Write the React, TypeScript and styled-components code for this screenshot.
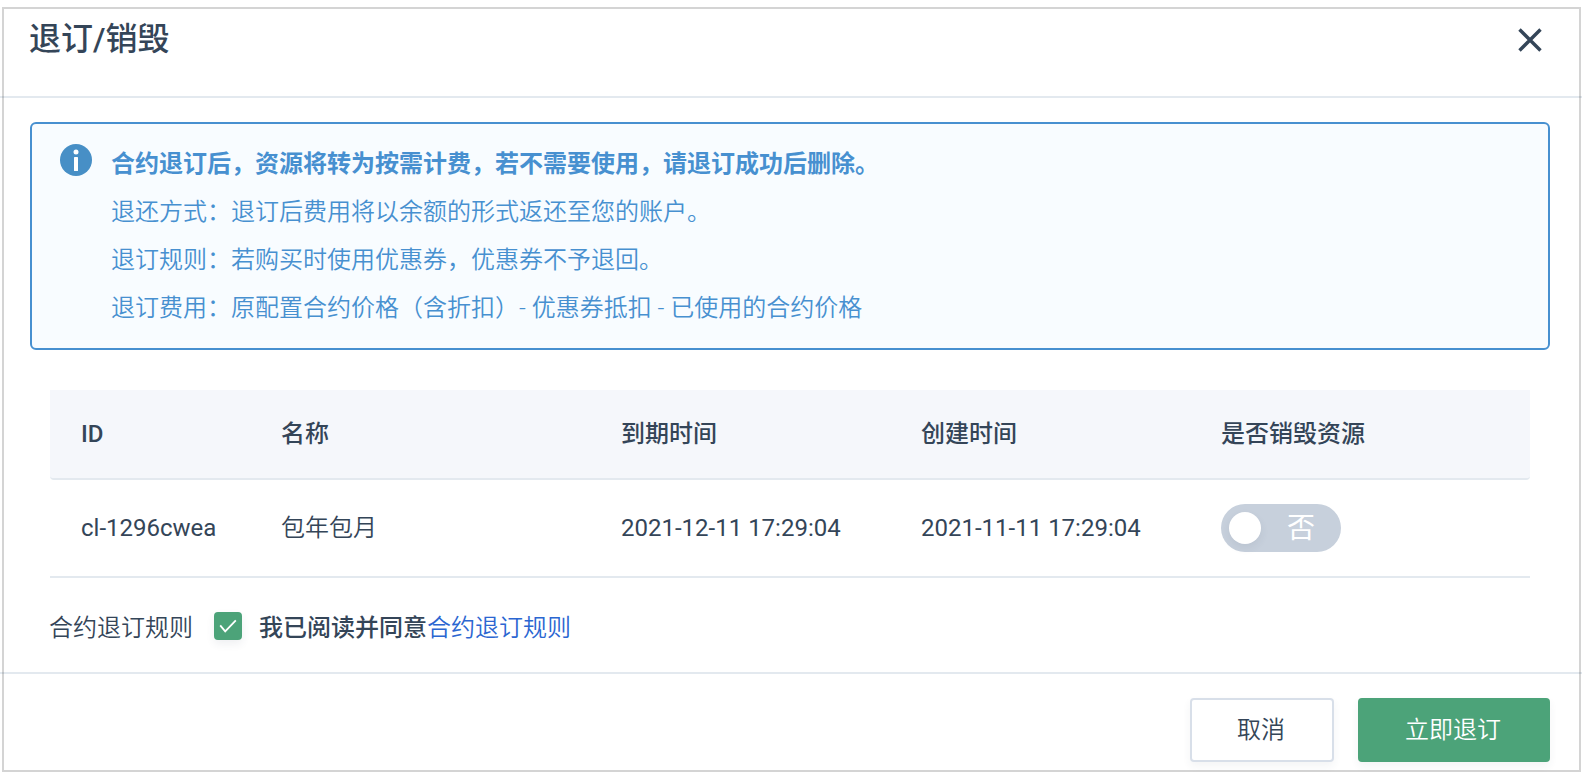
import React, { useState } from 'react';
import styled, { createGlobalStyle } from 'styled-components';

const color = {
  text: '#344558',
  line: '#e3e9ef',
  frame: 'rgba(0, 0, 0, 0.17)',
  blue: '#4790d0',
  infoBg: '#f8fcff',
  link: '#2b66d1',
  green: '#4ca379',
  headBg: '#f5f7fb',
  switchOff: '#c7d0dc',
  buttonBorder: '#d8dfe9',
};

const GlobalStyle = createGlobalStyle`
  * { box-sizing: border-box; }
  body {
    margin: 0;
    background: #fff;
    color: ${color.text};
    font-family: Roboto, 'Noto Sans CJK SC', sans-serif;
    font-size: 24px;
    font-weight: 350;
    line-height: 48px;
  }
`;

const Dialog = styled.main`
  position: relative;
  min-height: 100vh;
  display: flex;
  flex-direction: column;

  &::after {
    content: '';
    position: absolute;
    inset: 7px 1px 0 2px;
    border: 2px solid ${color.frame};
    pointer-events: none;
  }
`;

const Header = styled.header`
  display: flex;
  justify-content: space-between;
  align-items: flex-start;
  padding: 16px 32px 32px 29px;
  border-bottom: 2px solid ${color.line};
`;

const Title = styled.h1`
  margin: 0;
  font-size: 32px;
  font-weight: 500;
  line-height: 46px;
`;

const CloseButton = styled.button`
  display: flex;
  align-items: center;
  justify-content: center;
  width: 40px;
  height: 48px;
  padding: 0;
  border: 0;
  background: none;
  color: inherit;
  cursor: pointer;
`;

const Body = styled.section`
  flex: 1;
  padding: 24px 32px 20px 30px;
`;

const Notice = styled.div`
  display: flex;
  gap: 19px;
  padding: 16px 28px;
  border: 2px solid ${color.blue};
  border-radius: 6px;
  background: ${color.infoBg};
  color: ${color.blue};

  svg {
    flex: none;
    margin-top: 4px;
  }
`;

const NoticeLine = styled.p<{ $strong?: boolean }>`
  margin: 0;
  font-weight: ${(p) => (p.$strong ? 600 : 350)};
`;

const Content = styled.div`
  padding: 40px 20px 0;
`;

const Table = styled.table`
  width: 100%;
  table-layout: fixed;
  border-collapse: separate;
  border-spacing: 0;
  text-align: left;
`;

const HeadCell = styled.th<{ $width?: number }>`
  width: ${(p) => (p.$width ? `${p.$width}px` : 'auto')};
  height: 90px;
  padding: 0 0 0 31px;
  background: ${color.headBg};
  border-bottom: 2px solid ${color.line};
  font-weight: 500;

  &:first-child { border-bottom-left-radius: 4px; }
  &:last-child { border-bottom-right-radius: 4px; }
`;

const Cell = styled.td<{ $latin?: boolean }>`
  height: 98px;
  padding: 0 0 0 31px;
  border-bottom: 2px solid ${color.line};
  font-weight: ${(p) => (p.$latin ? 400 : 350)};
`;

const Switch = styled.label`
  position: relative;
  display: flex;
  align-items: center;
  justify-content: flex-end;
  width: 120px;
  height: 48px;
  padding: 2px 26px 0;
  color: #fff;
  font-size: 28px;
  font-weight: 400;
  cursor: pointer;

  span { position: relative; }
`;

const SwitchInput = styled.input`
  appearance: none;
  position: absolute;
  inset: 0;
  margin: 0;
  border-radius: 24px;
  background: ${color.switchOff};
  cursor: pointer;

  &::before {
    content: '';
    position: absolute;
    top: 8px;
    left: 8px;
    width: 32px;
    height: 32px;
    border-radius: 50%;
    background: #fff;
    box-shadow: 0 4px 8px rgba(54, 67, 92, 0.08);
  }

  &:checked { background: ${color.green}; }
  &:checked::before { left: 80px; }
  &:checked + span { margin-right: 40px; }
`;

const Agreement = styled.div`
  display: flex;
  align-items: center;
  margin-left: -1px;
  padding-top: 26px;
`;

const CheckboxBox = styled.span`
  position: relative;
  display: flex;
  width: 28px;
  height: 28px;
  margin: 0 17px 4px 21px;

  svg {
    position: absolute;
    inset: 0;
    pointer-events: none;
  }
`;

const CheckboxInput = styled.input`
  appearance: none;
  width: 28px;
  height: 28px;
  margin: 0;
  border: 2px solid ${color.buttonBorder};
  border-radius: 4px;
  background: #fff;
  cursor: pointer;

  &:checked {
    border-color: ${color.green};
    background: ${color.green};
    box-shadow: 0 4px 8px rgba(54, 67, 92, 0.08);
  }
`;

const AgreeLabel = styled.label`
  font-weight: 500;
`;

const RuleLink = styled.a`
  color: ${color.link};
  text-decoration: none;
`;

const Footer = styled.footer`
  display: flex;
  justify-content: flex-end;
  gap: 24px;
  padding: 24px 32px 10px;
  border-top: 2px solid ${color.line};
`;

const Button = styled.button<{ $primary?: boolean }>`
  height: 64px;
  padding: 0 47px 0 45px;
  border: 2px solid ${(p) => (p.$primary ? color.green : color.buttonBorder)};
  border-radius: 4px;
  background: ${(p) => (p.$primary ? color.green : '#fff')};
  color: ${(p) => (p.$primary ? '#fff' : color.text)};
  box-shadow: 0 4px 8px rgba(54, 67, 92, 0.06);
  font: inherit;
  cursor: pointer;
`;

const InfoIcon = () => (
  <svg width="32" height="32" viewBox="0 0 32 32" aria-hidden="true">
    <circle cx="16" cy="16" r="16" fill="#478fc6" />
    <circle cx="16" cy="8" r="2.5" fill="#fff" />
    <rect x="14" y="13" width="4" height="14" rx="0.6" fill="#fff" />
  </svg>
);

const CloseIcon = () => (
  <svg width="24" height="24" viewBox="0 0 24 24" fill="none" aria-hidden="true">
    <path d="M1.5 1.5 22.5 22.5 M22.5 1.5 1.5 22.5" stroke="currentColor" strokeWidth="3.4" />
  </svg>
);

const CheckIcon = () => (
  <svg width="28" height="28" viewBox="0 0 28 28" fill="none" aria-hidden="true">
    <path d="M6.2 13.4 11.2 19.4 21.8 8.4" stroke="#fff" strokeWidth="1.8" />
  </svg>
);

const notes = [
  '退还方式：退订后费用将以余额的形式返还至您的账户。',
  '退订规则：若购买时使用优惠券，优惠券不予退回。',
  '退订费用：原配置合约价格（含折扣）- 优惠券抵扣 - 已使用的合约价格',
];

const columns = [
  { title: 'ID', width: 200 },
  { title: '名称', width: 340 },
  { title: '到期时间', width: 300 },
  { title: '创建时间', width: 300 },
  { title: '是否销毁资源' },
];

const resources = [
  { id: 'cl-1296cwea', name: '包年包月', expires: '2021-12-11 17:29:04', created: '2021-11-11 17:29:04' },
];

export default function App() {
  const [destroy, setDestroy] = useState(false);
  const [agreed, setAgreed] = useState(true);

  return (
    <>
      <GlobalStyle />
      <Dialog>
        <Header>
          <Title>退订/销毁</Title>
          <CloseButton type="button" aria-label="关闭">
            <CloseIcon />
          </CloseButton>
        </Header>
        <Body>
          <Notice>
            <InfoIcon />
            <div>
              <NoticeLine $strong>合约退订后，资源将转为按需计费，若不需要使用，请退订成功后删除。</NoticeLine>
              {notes.map((note) => (
                <NoticeLine key={note}>{note}</NoticeLine>
              ))}
            </div>
          </Notice>
          <Content>
            <Table>
              <thead>
                <tr>
                  {columns.map((column) => (
                    <HeadCell key={column.title} scope="col" $width={column.width}>
                      {column.title}
                    </HeadCell>
                  ))}
                </tr>
              </thead>
              <tbody>
                {resources.map((resource) => (
                  <tr key={resource.id}>
                    <Cell $latin>{resource.id}</Cell>
                    <Cell>{resource.name}</Cell>
                    <Cell $latin>{resource.expires}</Cell>
                    <Cell $latin>{resource.created}</Cell>
                    <Cell>
                      <Switch>
                        <SwitchInput
                          type="checkbox"
                          role="switch"
                          checked={destroy}
                          onChange={(e) => setDestroy(e.target.checked)}
                        />
                        <span>{destroy ? '是' : '否'}</span>
                      </Switch>
                    </Cell>
                  </tr>
                ))}
              </tbody>
            </Table>
            <Agreement>
              <span>合约退订规则</span>
              <CheckboxBox>
                <CheckboxInput
                  id="agree"
                  type="checkbox"
                  checked={agreed}
                  onChange={(e) => setAgreed(e.target.checked)}
                />
                {agreed && <CheckIcon />}
              </CheckboxBox>
              <AgreeLabel htmlFor="agree">我已阅读并同意</AgreeLabel>
              <RuleLink href="#rules">合约退订规则</RuleLink>
            </Agreement>
          </Content>
        </Body>
        <Footer>
          <Button type="button">取消</Button>
          <Button type="button" $primary>
            立即退订
          </Button>
        </Footer>
      </Dialog>
    </>
  );
}
